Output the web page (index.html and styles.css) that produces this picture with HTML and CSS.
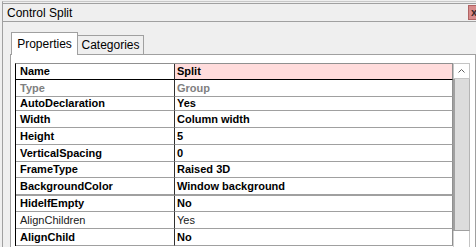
FILE: index.html
```html
<!DOCTYPE html>
<html>
<head>
<meta charset="utf-8">
<title>Control Split</title>
<link rel="stylesheet" href="styles.css">
</head>
<body>
<div class="window">
	<div class="title">
		<span>Control Split</span>
		<span class="close">x</span>
	</div>
	<div class="tabs">
		<div class="tab on">Properties</div>
		<div class="tab">Categories</div>
	</div>
	<div class="panel">
		<table class="grid">
			<tr class="head"><td class="key">Name</td><td class="val sel">Split</td></tr>
			<tr class="dim"><td class="key">Type</td><td class="val">Group</td></tr>
			<tr class="tight"><td class="key">AutoDeclaration</td><td class="val">Yes</td></tr>
			<tr><td class="key">Width</td><td class="val">Column width</td></tr>
			<tr><td class="key">Height</td><td class="val">5</td></tr>
			<tr><td class="key">VerticalSpacing</td><td class="val">0</td></tr>
			<tr class="short"><td class="key">FrameType</td><td class="val">Raised 3D</td></tr>
			<tr class="split"><td class="key">BackgroundColor</td><td class="val">Window background</td></tr>
			<tr class="short"><td class="key">HideIfEmpty</td><td class="val">No</td></tr>
			<tr class="plain"><td class="key">AlignChildren</td><td class="val">Yes</td></tr>
			<tr><td class="key">AlignChild</td><td class="val">No</td></tr>
		</table>
		<div class="scroll">
			<div class="up"><svg width="7" height="4" viewBox="0 0 7 4"><polyline points="0.5,3.5 3.5,0.5 6.5,3.5" fill="none" stroke="#606060" stroke-width="1"/></svg></div>
			<div class="thumb"></div>
			<div class="track"></div>
		</div>
	</div>
</div>
</body>
</html>
```

FILE: styles.css
```css
*{margin:0; padding:0; box-sizing:content-box;}
html,body{height:100%; overflow:hidden;}
body{background:#efefef; font:12px "Liberation Sans", Arial, sans-serif; color:#000;}

.window{margin:1px 0 0 2px; padding-top:1px; border-top:1px solid #c8c8c8; border-left:1px solid #a0a0a0; height:244px; overflow:hidden;}
.title{display:flex; align-items:center; height:17px; padding-left:4px; border-top:1px solid #a0a0a0; border-bottom:1px solid #a0a0a0;}
.close{margin-left:auto; margin-right:-8px; width:12px; height:13px; padding-left:2px; background:#d88c8c; border:1px solid #b06464; font-size:11px; font-weight:bold; line-height:12px; color:#3a2a2a;}

.tabs{display:flex; align-items:flex-end; height:32px; padding-left:8px;}
.tab{box-sizing:border-box; width:67px; height:19px; line-height:18px; text-align:center; border:1px solid #a0a0a0; border-bottom:none; background:#efefef;}
.tab.on{position:relative; z-index:1; height:23px; line-height:22px; margin-bottom:-1px; background:#fff;}
.tab + .tab{margin-left:-1px;}

.panel{display:flex; align-items:stretch; height:200px; margin-left:7px; padding:8px 5px 0 4px; background:#fff; border:1px solid #a0a0a0;}

.grid{flex:1; align-self:flex-start; border-collapse:separate; border-spacing:0; border-top:1px solid #909090; border-left:1px solid #000; font-size:11px; font-weight:bold; line-height:13px;}
.grid td{height:16px; padding:0; vertical-align:middle; white-space:nowrap; border-bottom:1px solid #a0a0a0;}
.grid .key{width:154px; padding-left:4px; border-right:1px solid #303030;}
.grid .val{padding-left:2px; border-right:1px solid #909090;}
.grid .head td{height:15px; border-bottom-color:#000;}
.grid .sel{background:#ffdcdc;}
.grid .dim td{color:#808080;}
.grid .tight td{height:13px;}
.grid .short td{height:15px;}
.grid .split td{border-bottom-width:2px;}
.grid .plain td{font-weight:normal; color:#202020;}

.scroll{display:flex; flex-direction:column; width:17px;}
.up{box-sizing:border-box; height:16px; display:flex; align-items:center; justify-content:center; background:#fff; border:1px solid #c4c4c4;}
.thumb{height:151px; background:#dcdcdc; border-left:2px solid #a0a0a0; border-right:1px solid #b4b4b4; border-bottom:1px solid #a0a0a0;}
.track{flex:1; background:#fff; border-left:1px solid #d0d0d0; border-right:1px solid #c4c4c4;}
```
